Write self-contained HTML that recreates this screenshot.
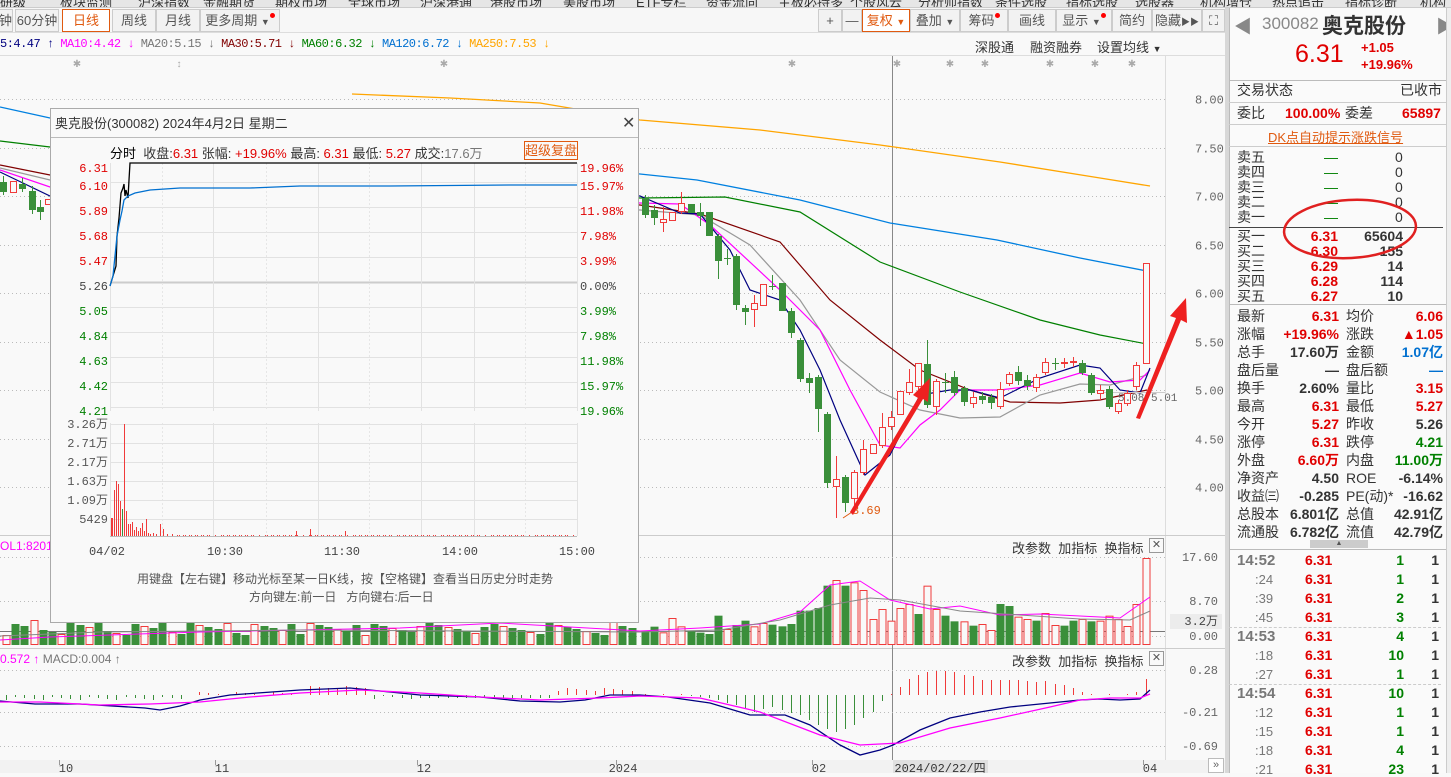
<!DOCTYPE html>
<html><head><meta charset="utf-8">
<style>
*{margin:0;padding:0;box-sizing:border-box}
body{width:1451px;height:773px;overflow:hidden;background:#f9f9f9;font-family:"Liberation Sans","Noto Sans CJK SC",sans-serif;font-size:12px;color:#333;position:relative}
.a{position:absolute;white-space:nowrap}
.nav{left:0;top:0;width:1451px;height:8px;background:#e6e6e6;overflow:hidden;border-bottom:1px solid #ccc}
.nav span{position:absolute;top:-8px;font-size:13px;color:#333}
.tb{top:9px;height:23px;background:#f2f2f2;border:1px solid #ccc;font-size:13px;color:#555;text-align:center;line-height:21px}
.dot{display:inline-block;width:5px;height:5px;border-radius:50%;background:#f00;vertical-align:top;margin-top:3px}
.r{color:#e00000}.g{color:#008000}.b{font-weight:bold}
.rp{font-size:14px;line-height:15px}
</style></head><body>
<div class="a nav">
<span style="left:0">研级</span><span style="left:60px">板块监测</span><span style="left:138px">沪深指数</span><span style="left:203px">金融期货</span><span style="left:275px">期权市场</span><span style="left:348px">全球市场</span><span style="left:420px">沪深港通</span><span style="left:490px">港股市场</span><span style="left:563px">美股市场</span><span style="left:636px">ETF专栏</span><span style="left:706px">资金流向</span><span style="left:778px">主板必持多</span><span style="left:850px">个股风云</span><span style="left:918px">分析师指数</span><span style="left:995px">条件选股</span><span style="left:1066px">指标选股</span><span style="left:1135px">选股器</span><span style="left:1200px">机构增仓</span><span style="left:1272px">热点追击</span><span style="left:1345px">指标诊断</span><span style="left:1420px">机构</span>
</div>
<div class="a" style="left:0;top:8px;width:1225px;height:25px;background:#f7f7f7;border-bottom:1px solid #ddd"></div>
<div class="a tb" style="left:-2px;width:15px">钟</div>
<div class="a tb" style="left:15px;width:44px">60分钟</div>
<div class="a tb" style="left:62px;width:48px;background:#fff;border-color:#e05a10;color:#e05a10">日线</div>
<div class="a tb" style="left:112px;width:44px">周线</div>
<div class="a tb" style="left:156px;width:44px">月线</div>
<div class="a tb" style="left:200px;width:80px">更多周期 <span style="font-size:9px">▼</span><span class="dot"></span></div>
<div class="a tb" style="left:818px;width:24px">+</div>
<div class="a tb" style="left:842px;width:20px">—</div>
<div class="a tb" style="left:862px;width:48px;background:#fff;border-color:#e05a10;color:#e05a10">复权 <span style="font-size:9px">▼</span></div>
<div class="a tb" style="left:910px;width:50px">叠加 <span style="font-size:9px">▼</span></div>
<div class="a tb" style="left:960px;width:48px">筹码<span class="dot"></span></div>
<div class="a tb" style="left:1008px;width:48px">画线</div>
<div class="a tb" style="left:1056px;width:56px">显示 <span style="font-size:9px">▼</span><span class="dot"></span></div>
<div class="a tb" style="left:1112px;width:40px">简约</div>
<div class="a tb" style="left:1152px;width:50px">隐藏<span style="font-size:9px">▶▶</span></div>
<div class="a tb" style="left:1202px;width:23px">⛶</div>

<div class="a" style="left:0;top:37px;font-size:12px;font-family:'Liberation Mono','Noto Sans CJK SC',monospace;letter-spacing:-0.5px">
<span style="color:#000080">5:4.47 ↑</span> <span style="color:#ff00ff">MA10:4.42 ↓</span> <span style="color:#777">MA20:5.15 ↓</span> <span style="color:#800000">MA30:5.71 ↓</span> <span style="color:#008000">MA60:6.32 ↓</span> <span style="color:#0070d0">MA120:6.72 ↓</span> <span style="color:#ffa500">MA250:7.53 ↓</span></div>
<div class="a" style="left:975px;top:37px;font-size:13px;color:#333">深股通</div>
<div class="a" style="left:1030px;top:37px;font-size:13px;color:#333">融资融券</div>
<div class="a" style="left:1097px;top:37px;font-size:13px;color:#333">设置均线 <span style="font-size:9px">▼</span></div>

<svg id="chart" class="a" style="left:0;top:0" width="1228" height="773"></svg>

<div class="a" style="left:1012px;top:538px;font-size:13px;color:#333">改参数&nbsp; 加指标&nbsp; 换指标</div>
<div class="a" style="left:1149px;top:538px;width:15px;height:15px;border:1px solid #999;font-size:11px;line-height:13px;text-align:center;color:#555">✕</div>
<div class="a" style="left:1012px;top:651px;font-size:13px;color:#333">改参数&nbsp; 加指标&nbsp; 换指标</div>
<div class="a" style="left:1149px;top:651px;width:15px;height:15px;border:1px solid #999;font-size:11px;line-height:13px;text-align:center;color:#555">✕</div>
<div class="a" style="left:0;top:539px;color:#ff00ff;font-size:12px">OL1:82018</div>
<div class="a" style="left:0;top:652px;font-size:12px"><span style="color:#ff00ff">0.572 ↑</span> <span style="color:#777">MACD:0.004 ↑</span></div>

<div class="a" style="left:50px;top:108px;width:589px;height:515px;background:#f9f9f9;border:1px solid #aaa">
 <div class="a" style="left:0;top:0;width:587px;height:29px;border-bottom:1px solid #bbb;font-size:13px;line-height:29px;padding-left:4px;color:#333">奥克股份(300082) 2024年4月2日 星期二</div>
 <div class="a" style="left:571px;top:4px;font-size:16px;color:#444">✕</div>
 <div class="a" style="left:59px;top:34px;font-size:13px;color:#333"><span style="color:#000;font-size:13px">分时</span>&nbsp; 收盘:<span class="r">6.31</span> 张幅: <span class="r">+19.96%</span> 最高: <span class="r">6.31</span> 最低: <span class="r">5.27</span> 成交:<span style="color:#777">17.6万</span></div>
 <div class="a" style="left:473px;top:32px;width:54px;height:19px;border:1px solid #e05a10;color:#e05a10;font-size:13px;line-height:17px;text-align:center">超级复盘</div>
 <div class="a" style="left:86px;top:461px;font-size:12px;color:#555">用键盘【左右键】移动光标至某一日K线，按【空格键】查看当日历史分时走势</div>
 <div class="a" style="left:198px;top:479px;font-size:12px;color:#555">方向键左:前一日&nbsp;&nbsp; 方向键右:后一日</div>
</div>
<svg id="pop" class="a" style="left:50px;top:108px" width="589" height="460"></svg>

<div class="a" style="left:1225px;top:8px;width:4px;height:765px;background:#d8d8d8"></div>
<div class="a" style="left:1229px;top:8px;width:222px;height:765px;background:#fafafa;border-left:1px solid #bbb"></div>
<div class="a" style="left:1234px;top:13px;font-size:18px;color:#888">◀</div>
<div class="a" style="left:1262px;top:14px;font-size:17px;color:#888">300082</div>
<div class="a" style="left:1322px;top:10px;font-size:21px;font-weight:bold;color:#333">奥克股份</div>
<div class="a" style="left:1436px;top:13px;font-size:18px;color:#888">▶</div>
<div class="a r" style="left:1295px;top:40px;font-size:25px">6.31</div>
<div class="a r b" style="left:1361px;top:40px;font-size:13px">+1.05</div>
<div class="a r b" style="left:1361px;top:57px;font-size:13px">+19.96%</div>
<div class="a" style="left:1229px;top:80px;width:222px;border-top:1px solid #bbb"></div>
<div class="a rp" style="left:1237px;top:83px">交易状态</div>
<div class="a rp" style="left:1400px;top:83px">已收市</div>
<div class="a" style="left:1229px;top:102px;width:222px;border-top:1px solid #ccc"></div>
<div class="a rp" style="left:1237px;top:106px">委比</div>
<div class="a rp r b" style="left:1285px;top:106px">100.00%</div>
<div class="a rp" style="left:1345px;top:106px">委差</div>
<div class="a rp r b" style="left:1402px;top:106px">65897</div>
<div class="a" style="left:1229px;top:124px;width:222px;border-top:1px solid #ccc"></div>
<div class="a" style="left:1268px;top:127px;font-size:13px;color:#e05a10;text-decoration:underline">DK点自动提示涨跌信号</div>
<div class="a" style="left:1229px;top:146px;width:222px;border-top:1px solid #ccc"></div>
<div id="book"></div>
<div class="a" style="left:1229px;top:227px;width:214px;border-top:1px solid #444"></div>
<div class="a" style="left:1229px;top:304px;width:222px;border-top:1px solid #bbb"></div>
<svg class="a" style="left:1280px;top:196px" width="140" height="66"><ellipse cx="70" cy="33" rx="66" ry="29" fill="none" stroke="#e02020" stroke-width="2.5" transform="rotate(-3 70 33)"/></svg>
<div id="stats"></div>
<div class="a" style="left:1310px;top:540px;width:58px;height:8px;background:#ccc;font-size:7px;text-align:center;line-height:8px;color:#555">▲</div>
<div class="a" style="left:1229px;top:549px;width:222px;border-top:1px solid #bbb"></div>
<div id="ticks"></div>
<div class="a" style="left:1229px;top:627px;width:212px;border-top:1px dashed #ccc"></div>
<div class="a" style="left:1229px;top:684px;width:212px;border-top:1px dashed #ccc"></div>
<div class="a" style="left:1446px;top:8px;width:5px;height:765px;background:#eee;border-left:1px solid #ccc"></div>
<div class="a" style="left:1208px;top:758px;width:16px;height:15px;border:1px solid #bbb;background:#fff;font-size:11px;line-height:13px;text-align:center;color:#666">»</div>

<script>
var S='';
function L(x1,y1,x2,y2,c,w,d){S+='<line x1="'+x1+'" y1="'+y1+'" x2="'+x2+'" y2="'+y2+'" stroke="'+c+'" stroke-width="'+(w||1)+'"'+(d?' stroke-dasharray="'+d+'"':'')+'/>';}
function P(pts,c,w){S+='<polyline fill="none" stroke="'+c+'" stroke-width="'+(w||1)+'" points="'+pts.map(function(p){return p.join(',')}).join(' ')+'"/>';}
function R(x,y,w,h,f,s){S+='<rect x="'+x+'" y="'+y+'" width="'+w+'" height="'+Math.max(h,1)+'" fill="'+f+'"'+(s?' stroke="'+s+'"':'')+'/>';}
function T(x,y,t,c,sz,anc){S+='<text x="'+x+'" y="'+y+'" fill="'+c+'" font-size="'+(sz||12)+'" font-family="Liberation Mono,monospace"'+(anc?' text-anchor="'+anc+'"':'')+'>'+t+'</text>';}
var GR='#3a8f3a',RD='#f03a3a';
L(0,55.5,1225,55.5,'#ddd');
L(1165.5,56,1165.5,760,'#ddd');
L(0,535.5,1225,535.5,'#ccc');L(0,648.5,1225,648.5,'#ccc');
R(0,760,1225,13,'#f2f2f2');
[8,7.5,7,6.5,6,5.5,5,4.5,4].forEach(function(p){var y=Math.round(99+(8-p)*97)+.5;L(0,y,1165,y,'#bbb',1,'1 3');T(1195,y+4,p.toFixed(2),'#666',12);});
[77,444,792,897,950,985,1050,1095,1132].forEach(function(x){T(x,67,'✱','#aaa',10,'middle');});T(179,67,'↕','#aaa',10,'middle');
L(892.5,56,892.5,760,'#888');
P([[352,94],[450,98],[540,103],[640,120],[760,130],[880,145],[1000,162],[1100,178],[1150,186]],'#ffa500',1.3);
P([[0,107],[50,118],[640,174],[697,180],[800,200],[890,223],[997,240],[1080,258],[1147,271]],'#0080e0',1.3);
P([[0,141],[50,147],[640,198],[725,197],[800,212],[880,262],[960,292],[1040,320],[1100,335],[1147,344]],'#008000',1.2);
P([[0,165],[50,175],[640,205],[700,214],[780,242],[830,300],[880,340],[920,370],[970,390],[1010,402],[1060,403],[1100,400],[1147,390]],'#800000',1.2);
P([[0,168],[50,180],[640,210],[700,215],[750,245],[800,300],[840,360],[880,392],[920,410],[960,418],[1000,417],[1040,395],[1080,384],[1110,385],[1147,375]],'#999',1.2);
P([[0,170],[50,187],[640,203],[680,204],[710,225],[780,290],[820,330],[850,390],[880,445],[900,448],[920,425],[940,410],[960,390],[1000,390],[1040,385],[1080,373],[1110,382],[1140,380],[1150,370]],'#ff00ff',1.2);
P([[0,172],[50,196],[640,196],[680,213],[700,214],[730,250],[750,290],[780,300],[800,330],[820,370],[840,420],[865,475],[890,455],[920,395],[950,390],[970,390],[1000,398],[1040,378],[1080,365],[1100,368],[1120,390],[1140,393],[1150,368]],'#000080',1.2);
L(1100,392.5,1165,392.5,'#ccc');
function K(x,t,b,c,wt,wb){wt=wt||t;wb=wb||b;var col=c=='g'?GR:RD;L(x+.5,wt,x+.5,wb,col);if(c=='g')R(x-3,t,7,b-t,GR);else R(x-2.5,t+.5,6,Math.max(b-t-1,1),'#f9f9f9',RD);}
[[3,182,192,'g',176,195],[13,181,193,'r'],[22,184,189,'g',178,192],[32,191,210,'g',186,214],[40,207,212,'g',200,220],[48,199,205,'r']].forEach(function(k){K(k[0],k[1],k[2],k[3],k[4],k[5]);});
var C=[[198,215,'g',195,218],[210,218,'g',205,225],[219,223,'r',207,232],[212,221,'r'],[203,212,'r',192,214],[204,213,'g'],[212,216,'g',203,226],[212,236,'g'],[236,261,'g',234,279],[258,259,'g',249,265],[256,305,'g',254,310],[308,312,'g',305,325],[303,310,'r',295,327],[284,306,'r'],[286,287,'g',275,290],[283,311,'g'],[311,333,'g',308,338],[340,379,'g',338,382],[378,383,'g',373,393],[377,409,'g',375,432],[414,483,'g',412,488],[479,487,'r',456,518],[477,503,'g',475,512],[472,499,'r',470,505],[449,473,'r',440,475],[444,454,'r'],[427,446,'r',413,448],[417,427,'r',411,430],[391,415,'r'],[382,393,'r',369,395],[363,387,'r',363,390],[364,405,'g',340,408],[381,407,'r',379,415],[382,383,'g',373,393],[377,393,'g',371,396],[388,402,'g',386,406],[397,404,'r',392,408],[396,400,'g',392,404],[397,403,'g',394,409],[389,407,'r',382,409],[374,384,'r',372,386],[372,381,'g',366,385],[380,386,'g',375,390],[377,388,'r',374,392],[362,373,'r',358,375],[363,364,'g',358,370],[362,363,'r',358,368],[361,362,'r',357,367],[363,373,'g',360,375],[375,393,'g',373,395],[390,394,'r',385,400],[389,407,'g',386,409],[403,412,'r',400,414],[393,404,'r',390,406],[365,387,'r',362,390],[263,364,'r']];
var X0=645,DX=9.1;
C.forEach(function(k,i){K(Math.round(X0+i*DX),k[0],k[1],k[2],k[3],k[4]);});
T(852,514,'3.69','#e05a10',12);L(843,518,852,512,'#e05a10');
T(1118,401,'5.08 5.01','#666',11);
S+='<polygon points="850,512 918,398 913,395 930,378 928,402 923,399 853,515" fill="#ee2020"/>';
S+='<polygon points="1136,418 1176,318 1170,316 1186,298 1187,323 1181,320 1140,419" fill="#ee2020"/>';
[[557,'17.60'],[601,'8.70'],[636,'0.00']].forEach(function(a){L(0,a[0]+.5,1165,a[0]+.5,'#bbb',1,'1 3');T(1218,a[0]+4,a[1],'#666',12,'end');});
R(1170,614,52,15,'#ececec');T(1218,625,'3.2万','#444',12,'end');
L(0,631.5,1165,631.5,'#777');
var VZ=[300,288,305,262,287,302,306,310,255,295,283,270,287,277,282,287,280,240,240,232,165,148,165,155,178,265,235,270,232,220,250,165,235,255,272,272,285,280,298,220,226,258,265,270,247,283,285,270,265,272,270,255,265,286,220,82];
var VC='ggrrrggggrggrrgggggggrgrrrrrrrgrrggrgrrggrrgrrggrgrrrrr';
function VB(x,h,c){if(c=='g')R(x-3.5,645-h,8,h,GR);else R(x-3,645-h+.5,7,h-1,'#f9f9f9',RD);}
VZ.forEach(function(z,i){var h=(343-z)/3;VB(Math.round(X0+i*DX),h,VC[i]||'r');});
for(var i=0;i<70;i++){var x=Math.round(6+i*9.2);if(x>640)break;var h=10+((i*37)%13)+(i%7==3?8:0);VB(x,h,(i*5)%3==0?'r':'g');}
P([[0,640],[50,637],[200,632],[400,628],[500,623],[640,631],[700,628],[760,624],[800,612],[830,585],[860,581],[890,600],[930,609],[960,606],[1000,615],[1040,614],[1080,616],[1120,618],[1150,597]],'#ff00ff',1);
P([[0,636],[100,632],[300,630],[640,632],[720,630],[780,620],[830,605],[870,598],[900,600],[960,611],[1020,615],[1080,619],[1130,620],[1150,611]],'#888',1);
[[670,'0.28'],[712,'-0.21'],[746,'-0.69']].forEach(function(a){L(0,a[0]+.5,1165,a[0]+.5,'#bbb',1,'1 3');T(1218,a[0]+4,a[1],'#666',12,'end');});
var H=[1,0,1,0,1,-1,-2,-3,-5,-8,-10,-14,-17,-14,-12,-15,-18,-20,-25,-30,-34,-37,-34,-30,-23,-17,-6,1,8,16,20,23,24,24,23,20,19,15,15,15,15,15,14,13,14,11,10,7,3,1,0,1,0,1,3,16];
H.forEach(function(v,i){var x=Math.round(X0+i*DX)+.5;if(v>0)L(x,695,x,695-v,RD);else if(v<0)L(x,695,x,695-v,GR);});
for(var i=0;i<69;i++){var x=Math.round(6+i*9.2)+.5;var v=(i<20?-4:i<40?(i>32?7:1):i<60?-3:5)+((i*3)%4)-1;if(v<0&&i>44&&i<60)v=-3;L(x,695,x,695-v,v>0?RD:GR);}
P([[0,701],[35,704],[80,704],[145,708],[160,710],[180,706],[200,700],[230,695],[300,690],[350,688],[380,691],[420,695],[480,697],[520,701],[560,702],[585,700],[610,695],[640,695],[668,697],[710,703],[750,715],[785,715],[810,725],[840,745],[860,755],[880,750],[893,745],[920,730],[950,718],[980,712],[1010,707],[1050,703],[1080,700],[1100,699],[1120,700],[1140,699],[1150,690]],'#000080',1.3);
P([[0,702],[40,702],[100,705],[150,704],[200,702],[250,697],[300,693],[360,690],[420,693],[480,697],[540,700],[600,698],[640,696],[700,698],[760,712],[820,735],[860,745],[900,743],[950,728],[1000,718],[1050,707],[1080,700],[1110,698],[1140,698],[1150,694]],'#ff00ff',1.3);
[[66,'10'],[222,'11'],[424,'12'],[623,'2024'],[819,'02'],[1150,'04']].forEach(function(a){L(a[0]-6.5,760,a[0]-6.5,765,'#999');T(a[0],772,a[1],'#444',12,'middle');});
R(893,760,95,13,'#e0e0e0');T(940,772,'2024/02/22/四','#333',12,'middle');
document.getElementById('chart').innerHTML=S;

S='';
var ys=[[60,'6.31','19.96%','#e00000'],[78,'6.10','15.97%','#e00000'],[103,'5.89','11.98%','#e00000'],[128,'5.68','7.98%','#e00000'],[153,'5.47','3.99%','#e00000'],[178,'5.26','0.00%','#444'],[203,'5.05','3.99%','#008000'],[228,'4.84','7.98%','#008000'],[253,'4.63','11.98%','#008000'],[278,'4.42','15.97%','#008000'],[303,'4.21','19.96%','#008000']];
ys.forEach(function(a,i){var y=(i==0?55:a[0]-4)+.5;if(i>0)L(60,y,527,y,i==5?'#ccc':'#e2e2e2',i==5?2:1);T(58,a[0]+4,a[1],a[3],12,'end');T(530,a[0]+4,a[2],a[3],12);});
[60,163,268,371,424,527].forEach(function(x){L(x+.5,55,x+.5,303,'#e2e2e2');L(x+.5,315,x+.5,428,'#e2e2e2');});
[112,216,319,475].forEach(function(x){L(x+.5,55,x+.5,303,'#e6e6e6',1,'2 2');L(x+.5,315,x+.5,428,'#e6e6e6',1,'2 2');});
P([[60,178],[63,168],[66,158],[67,128],[69,110],[71,85],[73,80],[74,76],[75,88],[76,82],[78,90],[79,72],[80,55],[527,55]],'#000',1.3);
P([[60,178],[63,168],[65,148],[67,128],[70,112],[72,103],[74,92],[78,88],[85,85],[100,82],[130,80],[200,80],[250,78],[340,78],[460,77],[527,77]],'#0070d0',1.3);
[[316,'3.26万'],[335,'2.71万'],[354,'2.17万'],[373,'1.63万'],[392,'1.09万'],[411,'5429']].forEach(function(a,i){var y=a[0];L(60,y+.5,527,y+.5,'#e2e2e2');T(58,y+4,a[1],'#555',12,'end');});
var vb=[[61,18],[62,18],[64,46],[66,55],[68,52],[70,35],[72,27,'g'],[74,112],[76,25],[78,12],[80,12],[82,14],[84,6],[86,9],[88,5],[90,8],[92,13],[94,5],[96,17],[98,3],[100,2],[103,3],[106,2],[110,12],[113,7],[117,2],[122,2],[246,5],[260,7],[295,5]];
vb.forEach(function(b){var x=b[0]+.5;L(x,428,x,428-b[1],b[2]?GR:RD);});
for(var x=125;x<525;x+=2){if(Math.sin(x)>-0.3)L(x+.5,428,x+.5,427,RD);}
L(60,428.5,527,428.5,'#bbb');
[[57,'04/02'],[175,'10:30'],[292,'11:30'],[410,'14:00'],[527,'15:00']].forEach(function(a){T(a[0],447,a[1],'#444',12,'middle');});
document.getElementById('pop').innerHTML=S;

var h='',nm=['卖五','卖四','卖三','卖二','卖一'];
nm.forEach(function(n,i){var y=150+i*15;h+='<div class="a rp" style="left:1237px;top:'+y+'px">'+n+'</div><div class="a rp g" style="left:1324px;top:'+y+'px">—</div><div class="a rp" style="left:1395px;top:'+y+'px">0</div>';});
var bb=[['买一','6.31','65604'],['买二','6.30','155'],['买三','6.29','14'],['买四','6.28','114'],['买五','6.27','10']];
bb.forEach(function(b,i){var y=229+i*15;h+='<div class="a rp" style="left:1237px;top:'+y+'px">'+b[0]+'</div><div class="a rp r b" style="right:113px;top:'+y+'px">'+b[1]+'</div><div class="a rp b" style="right:48px;top:'+y+'px;color:#333">'+b[2]+'</div>';});
document.getElementById('book').innerHTML=h;
h='';
var st=[['最新','6.31','r','均价','6.06','r'],['涨幅','+19.96%','r','涨跌','▲1.05','r'],['总手','17.60万','k','金额','1.07亿','bl'],['盘后量','—','k','盘后额','—','bl'],['换手','2.60%','k','量比','3.15','r'],['最高','6.31','r','最低','5.27','r'],['今开','5.27','r','昨收','5.26','k'],['涨停','6.31','r','跌停','4.21','g'],['外盘','6.60万','r','内盘','11.00万','g'],['净资产','4.50','k','ROE','-6.14%','k'],['收益㈢','-0.285','k','PE(动)*','-16.62','k'],['总股本','6.801亿','k','总值','42.91亿','k'],['流通股','6.782亿','k','流值','42.79亿','k']];
var col={r:'#e00000',g:'#008000',k:'#333',bl:'#0070d0'};
st.forEach(function(s,i){var y=309+i*18;h+='<div class="a rp" style="left:1237px;top:'+y+'px">'+s[0]+'</div><div class="a rp b" style="right:112px;top:'+y+'px;color:'+col[s[2]]+'">'+s[1]+'</div><div class="a rp" style="left:1346px;top:'+y+'px">'+s[3]+'</div><div class="a rp b" style="right:8px;top:'+y+'px;color:'+col[s[5]]+'">'+s[4]+'</div>';});
document.getElementById('stats').innerHTML=h;
h='';
var tk=[['14:52',1],[':24',1],[':39',2],[':45',3],['14:53',4],[':18',10],[':27',1],['14:54',10],[':12',1],[':15',1],[':18',4],[':21',23]];
tk.forEach(function(t,i){var y=553+i*19;var full=t[0].length>3;h+='<div class="a rp'+(full?' b':'')+'" style="left:'+(full?1237:1255)+'px;top:'+y+'px;color:#777;font-size:'+(full?15:13)+'px">'+t[0]+'</div><div class="a rp r b" style="left:1305px;top:'+y+'px">6.31</div><div class="a rp g b" style="right:47px;top:'+y+'px">'+t[1]+'</div><div class="a rp b" style="right:12px;top:'+y+'px;color:#333">1</div>';});
document.getElementById('ticks').innerHTML=h;
</script>
</body></html>
